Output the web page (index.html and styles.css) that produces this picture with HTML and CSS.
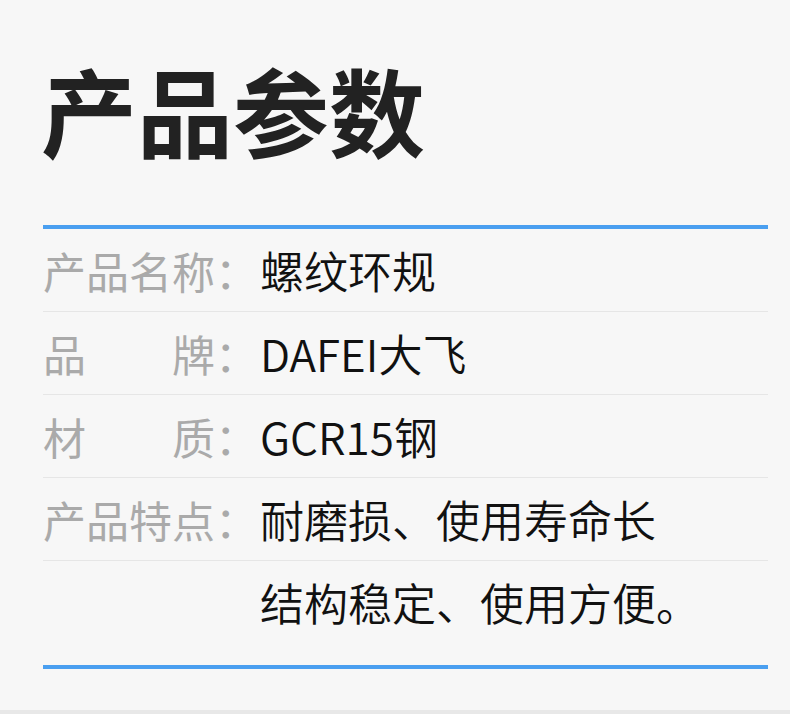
FILE: index.html
```html
<!DOCTYPE html>
<html lang="zh-CN">
<head>
    <meta charset="UTF-8">
    <meta name="viewport" content="width=device-width, initial-scale=1.0">
    <title>产品参数</title>
    <link rel="stylesheet" href="styles.css">
</head>
<body>
    <div class="page">
        <h1 class="title">产品参数</h1>
        <div class="rule"></div>
        <div class="params">
            <div class="row">
                <span class="label">产品名称</span><span class="colon">：</span>
                <span class="value">螺纹环规</span>
            </div>
            <div class="row">
                <span class="label spread"><span>品</span><span>牌</span></span><span class="colon">：</span>
                <span class="value">DAFEI大飞</span>
            </div>
            <div class="row">
                <span class="label spread"><span>材</span><span>质</span></span><span class="colon">：</span>
                <span class="value">GCR15钢</span>
            </div>
            <div class="row">
                <span class="label">产品特点</span><span class="colon">：</span>
                <span class="value">耐磨损、使用寿命长</span>
            </div>
            <div class="row">
                <span class="label"></span><span class="colon"></span>
                <span class="value">结构稳定、使用方便。</span>
            </div>
        </div>
        <div class="rule bottom"></div>
    </div>
    <div class="bottom-bar"></div>
</body>
</html>
```

FILE: styles.css
```css
body {
    margin: 0;
    padding: 0;
    background-color: #f7f7f7;
    font-family: "Noto Sans CJK SC", "Noto Sans", sans-serif;
}
.page {
    height: 710px;
    padding: 0 22px 0 43px;
    overflow: hidden;
}
.title {
    margin: 61px 0 0 -2px;
    font-size: 96px;
    line-height: 96px;
    font-weight: 700;
    color: #222;
}
.rule {
    height: 4px;
    margin-top: 68px;
    background-color: #4a9ff0;
}
.rule.bottom {
    margin-top: 22px;
}
.row {
    display: flex;
    align-items: center;
    height: 82px;
    border-bottom: 1px solid #e6e6e6;
    font-size: 43px;
}
.row:last-child {
    border-bottom: none;
}
.label {
    width: 4em;
    flex: none;
    color: #aaa;
    white-space: nowrap;
}
.label.spread {
    display: flex;
    justify-content: space-between;
}
.colon {
    width: 1em;
    flex: none;
    color: #aaa;
}
.value {
    padding-left: 2px;
    font-size: 44px;
    font-weight: 350;
    color: #111;
    white-space: nowrap;
}
.bottom-bar {
    height: 4px;
    background-color: #e8e8e8;
}
```
